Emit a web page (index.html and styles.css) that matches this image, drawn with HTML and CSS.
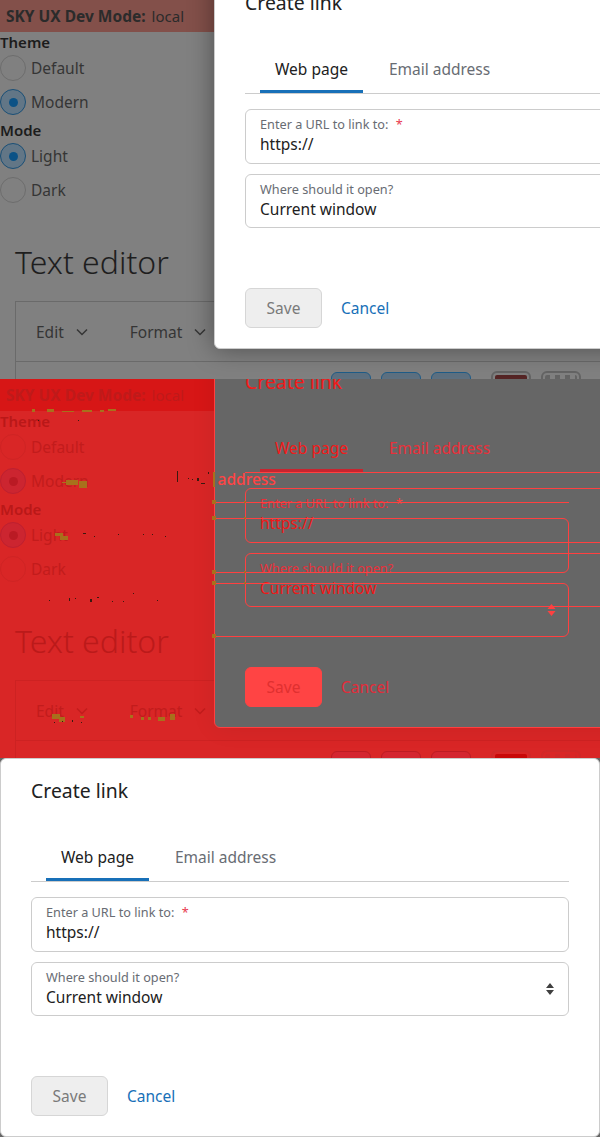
FILE: index.html
```html
<!DOCTYPE html>
<html lang="en">
<head>
  <meta charset="UTF-8">
  <meta name="viewport" content="width=device-width, initial-scale=1.0">
  <title>Text editor visual diff</title>
  <link rel="stylesheet" href="styles.css">
</head>
<body>
  <!-- baseline -->
  <section class="pane pane-base">
    <div class="dev-bar"><b>SKY UX Dev Mode:</b> <span>local</span></div>
    <div class="group-label">Theme</div>
    <div class="radio-group">
      <div class="radio-row"><span class="radio"></span>Default</div>
      <div class="radio-row"><span class="radio radio-on"></span>Modern</div>
    </div>
    <div class="group-label">Mode</div>
    <div class="radio-group">
      <div class="radio-row"><span class="radio radio-on"></span>Light</div>
      <div class="radio-row"><span class="radio"></span>Dark</div>
    </div>
    <h1 class="page-title">Text editor</h1>
    <div class="editor">
      <div class="menu-row">
        <span class="menu-item">Edit <svg class="chevron" viewBox="0 0 12 8"><path d="M1 1.5l5 5 5-5"/></svg></span>
        <span class="menu-item">Format <svg class="chevron" viewBox="0 0 12 8"><path d="M1 1.5l5 5 5-5"/></svg></span>
      </div>
      <div class="tool-row">
        <span class="tool"></span><span class="tool"></span><span class="tool"></span>
        <span class="swatch swatch-color"></span><span class="swatch swatch-check"></span>
      </div>
    </div>
    <div class="modal">
      <h2 class="modal-title">Create link</h2>
      <div class="tabs"><span class="tab tab-active">Web page</span><span class="tab">Email address</span></div>
      <div class="field field-url"><label>Enter a URL to link to: <i>*</i></label><div class="field-value">https://</div></div>
      <div class="field field-select"><label>Where should it open?</label><div class="field-value">Current window</div>
        <svg class="updown" viewBox="0 0 8 12"><path d="M4 0l4 5H0zM0 7h8l-4 5z"/></svg></div>
      <div class="actions"><span class="btn-save">Save</span><span class="btn-cancel">Cancel</span></div>
    </div>
  </section>

  <!-- diff -->
  <section class="pane pane-diff">
    <div class="dev-bar"><b>SKY UX Dev Mode:</b> <span>local</span></div>
    <div class="group-label">Theme</div>
    <div class="radio-group">
      <div class="radio-row"><span class="radio"></span>Default</div>
      <div class="radio-row"><span class="radio radio-on"></span>Modern</div>
    </div>
    <div class="group-label">Mode</div>
    <div class="radio-group">
      <div class="radio-row"><span class="radio radio-on"></span>Light</div>
      <div class="radio-row"><span class="radio"></span>Dark</div>
    </div>
    <h1 class="page-title">Text editor</h1>
    <div class="editor">
      <div class="menu-row">
        <span class="menu-item">Edit <svg class="chevron" viewBox="0 0 12 8"><path d="M1 1.5l5 5 5-5"/></svg></span>
        <span class="menu-item">Format <svg class="chevron" viewBox="0 0 12 8"><path d="M1 1.5l5 5 5-5"/></svg></span>
      </div>
      <div class="tool-row">
        <span class="tool"></span><span class="tool"></span><span class="tool"></span>
        <span class="swatch swatch-color"></span><span class="swatch swatch-check"></span>
      </div>
    </div>
    <div class="modal">
      <h2 class="modal-title">Create link</h2>
      <div class="tabs"><span class="tab tab-active">Web page</span><span class="tab">Email address</span></div>
      <div class="field field-url"><label>Enter a URL to link to: <i>*</i></label><div class="field-value">https://</div></div>
      <div class="field field-select"><label>Where should it open?</label><div class="field-value">Current window</div></div>
      <div class="actions"><span class="btn-save">Save</span><span class="btn-cancel">Cancel</span></div>
      <!-- outlines of the shifted modal, clipped by this one -->
      <div class="ghost-line"></div>
      <div class="ghost-box ghost-url"></div>
      <div class="ghost-box ghost-select"></div>
      <div class="ghost-text">Email address</div>
      <svg class="ghost-updown" viewBox="0 0 8 12"><path d="M4 0l4 5H0zM0 7h8l-4 5z"/></svg>
    </div>
    <svg class="noise" viewBox="0 0 600 379">
      <path class="noise-tan" d="M32 30h3v3h-3zM47 30h7v3h-7zM62 32h12v1H62zM82 31h10v2H82zM100 31h4v2h-4zM108 30h8v2h-8zM62 103h5v1h-5zM66 101h12v5H66zM79 102h8v7h-8zM55 154h8v3h-8zM60 157h8v4h-8zM52 335h8v5h-8zM59 338h6v5h-6zM80 337h4v2h-4zM130 336h3v3h-3zM141 338h3v3h-3zM148 338h3v3h-3zM158 338h7v4h-7zM170 335h5v6h-5zM213 93h2v15h-2zM212 121h4v4h-4zM212 137h4v4h-4zM212 191h4v4h-4zM212 202h4v4h-4zM212 255h4v4h-4zM244 122h2v2h-2zM244 138h2v2h-2zM244 192h2v2h-2zM244 203h2v2h-2z"/>
      <path class="noise-dark" d="M177 92h1v11h-1zM188 99h1v1h-1zM192 100h1v1h-1zM197 99h2v3h-2zM201 104h4v1h-4zM208 93h1v2h-1zM38 41h1v1h-1zM78 41h1v1h-1zM83 154h3v1h-3zM94 157h1v1h-1zM118 155h1v1h-1zM143 155h1v1h-1zM152 155h1v1h-1zM165 157h1v1h-1zM49 221h1v1h-1zM69 219h1v3h-1zM75 219h1v1h-1zM90 220h2v3h-2zM97 218h2v1h-2zM112 222h1v1h-1zM123 222h1v1h-1zM133 214h1v1h-1zM157 221h1v1h-1zM54 343h1v1h-1zM62 342h1v1h-1zM72 341h1v2h-1zM81 343h1v1h-1z"/>
    </svg>
  </section>

  <!-- current -->
  <section class="pane pane-current">
    <div class="modal">
      <h2 class="modal-title">Create link</h2>
      <div class="tabs"><span class="tab tab-active">Web page</span><span class="tab">Email address</span></div>
      <div class="field field-url"><label>Enter a URL to link to: <i>*</i></label><div class="field-value">https://</div></div>
      <div class="field field-select"><label>Where should it open?</label><div class="field-value">Current window</div>
        <svg class="updown" viewBox="0 0 8 12"><path d="M4 0l4 5H0zM0 7h8l-4 5z"/></svg></div>
      <div class="actions"><span class="btn-save">Save</span><span class="btn-cancel">Cancel</span></div>
    </div>
  </section>
</body>
</html>
```

FILE: styles.css
```css
* { box-sizing: border-box; }
body { margin: 0; width: 600px; height: 1137px; overflow: hidden; font-family: "Noto Sans", sans-serif; font-size: 15.5px; }

.pane { position: relative; height: 379px; overflow: hidden; background: var(--page); color: var(--text); }

.pane-base {
  --page: #808080; --bar: #83504a; --bar-text: #2b2b2b; --text: #353535; --strong: #1c1c1c; --title: #1e1e1e;
  --ring: #6d6d6d; --on-fill: #627686; --on-ring: #1a4f76; --on-dot: #0b5286; --edge: #6a6a6a;
  --tool: #5d7080; --tool-edge: #1f5c88; --swatch-edge: #646464; --swatch: #552525; --shadow: rgba(0, 0, 0, .4);
  --modal: #fff; --modal-edge: #ccc; --modal-title: #212121; --tab: #212121; --tab-muted: #686c73; --tab-on: #1870b8;
  --label: #686c73; --star: #e8384f; --value: #212121; --save-bg: #eee; --save-edge: #d6d6d6; --save: #7a7a7a; --cancel: #1870b8; --line: #ccc;
}
.pane-diff {
  --page: #d92626; --bar: #d71616; --bar-text: #bf1a1a; --text: #c21c1c; --strong: #b91818; --title: #bb1a1a;
  --ring: #cf2424; --on-fill: #cc2530; --on-ring: #bd2030; --on-dot: #ba1a24; --edge: #cd2222;
  --tool: #d42630; --tool-edge: #bd1c24; --swatch-edge: #d02828; --swatch: #c80808; --shadow: rgba(0, 0, 0, .07);
  --modal: #666; --modal-edge: #ff4040; --modal-title: #f21a1a; --tab: #f21a1a; --tab-muted: #e8303a; --tab-on: #c8242f;
  --label: #e8303a; --star: #ff4040; --value: #f01818; --save-bg: #ff4444; --save-edge: #ff4444; --save: #e03030; --cancel: #e22c3a; --line: #ff4040;
}
.pane-current {
  --page: #666; --modal: #fff; --modal-edge: #ccc; --modal-title: #212121; --tab: #212121; --tab-muted: #686c73; --tab-on: #1870b8;
  --label: #686c73; --star: #e8384f; --value: #212121; --save-bg: #eee; --save-edge: #d6d6d6; --save: #7a7a7a; --cancel: #1870b8; --line: #ccc;
}

/* page behind the modal */
.dev-bar { display: flex; gap: 6px; height: 32px; padding-left: 6px; background: var(--bar); color: var(--bar-text); font-size: 15px; line-height: 32px; }
.dev-bar b { font-size: 15.5px; font-weight: 700; }
.group-label { height: 22px; margin-bottom: 1px; font-weight: 600; font-size: 15px; line-height: 20px; color: var(--strong); }
.radio-group { display: flex; flex-direction: column; gap: 8px; margin-bottom: 5px; }
.radio-row { display: flex; align-items: center; gap: 5px; height: 26px; font-size: 15.5px; }
.radio { width: 26px; height: 26px; border: 1px solid var(--ring); border-radius: 50%; display: flex; align-items: center; justify-content: center; }
.radio-on { border-color: var(--on-ring); background: var(--on-fill); }
.radio-on::after { content: ""; width: 9px; height: 9px; border-radius: 50%; background: var(--on-dot); }
.page-title { margin: 39px 0 19px 15px; font-size: 32px; font-weight: 300; line-height: 40px; color: var(--title); }

.editor { width: 800px; margin-left: 15px; border: 1px solid var(--edge); }
.menu-row { display: flex; align-items: center; gap: 42px; height: 60px; padding-left: 20px; border-bottom: 1px solid var(--edge); }
.menu-item { display: flex; align-items: center; gap: 12px; font-size: 15.5px; }
.chevron { width: 12px; height: 8px; fill: none; stroke: var(--text); stroke-width: 1.5; }
.tool-row { display: flex; gap: 10px; height: 60px; padding: 10px 0 0 315px; }
.tool { width: 40px; height: 32px; border: 1px solid var(--tool-edge); border-radius: 6px; background: var(--tool); }
.swatch { width: 40px; height: 32px; border: 2px solid var(--swatch-edge); border-radius: 6px; margin-top: -1px; padding: 2px; }
.swatch-color { margin-left: 10px; background: var(--swatch) content-box; }
.swatch-check { background: repeating-linear-gradient(90deg, var(--swatch-edge) 0 5px, transparent 5px 10px) content-box; }

/* modal */
.modal { position: absolute; left: 214px; top: -30px; width: 600px; padding: 19px 30px 20px; overflow: hidden; background: var(--modal); border: 1px solid var(--modal-edge); border-radius: 6px; box-shadow: 0 0 26px var(--shadow); }
.pane-current .modal { left: 0; top: 0; }
.modal-title { height: 26px; margin: 0 0 29px; font-size: 19.4px; font-weight: 400; line-height: 26px; color: var(--modal-title); }
.tabs { display: flex; gap: 11px; height: 49px; padding-left: 15px; border-bottom: 1px solid var(--line); }
.tab { height: 48px; padding: 0 15px; font-size: 15.5px; line-height: 49px; color: var(--tab-muted); }
.tab-active { border-bottom: 3px solid var(--tab-on); color: var(--tab); }
.field { position: relative; width: 538px; height: 55px; margin-top: 15px; padding: 5px 14px; border: 1px solid var(--line); border-radius: 6px; }
.field-select { height: 54px; margin-top: 10px; }
.field label { display: block; font-size: 12.7px; line-height: 18px; color: var(--label); }
.field label i { margin-left: 4px; font-style: normal; color: var(--star); }
.field-value { font-size: 15.5px; line-height: 22px; color: var(--value); }
.updown { position: absolute; right: 14px; top: 20px; width: 8px; height: 12px; fill: #404040; }
.actions { display: flex; align-items: center; gap: 19px; margin-top: 60px; }
.btn-save { width: 77px; height: 40px; border: 1px solid var(--save-edge); border-radius: 6px; background: var(--save-bg); color: var(--save); font-size: 15.5px; line-height: 38px; text-align: center; }
.btn-cancel { font-size: 15.5px; color: var(--cancel); }

/* diff overlays */
.ghost-line { position: absolute; left: -184px; top: 152px; width: 538px; height: 1px; background: #ff4040; }
.ghost-box { position: absolute; left: -184px; width: 538px; border: 1px solid #ff4040; border-radius: 6px; }
.ghost-url { top: 168px; height: 55px; }
.ghost-select { top: 233px; height: 54px; }
.ghost-text { position: absolute; left: -42px; top: 118px; font-size: 15.5px; font-weight: 500; line-height: 22px; color: #ff4444; white-space: nowrap; }
.ghost-updown { position: absolute; left: 332px; top: 254px; width: 9px; height: 12px; fill: #ff4040; }
.noise { position: absolute; left: 0; top: 0; width: 600px; height: 379px; }
.noise-tan { fill: #a8701c; }
.noise-dark { fill: #3a1a10; }
```
